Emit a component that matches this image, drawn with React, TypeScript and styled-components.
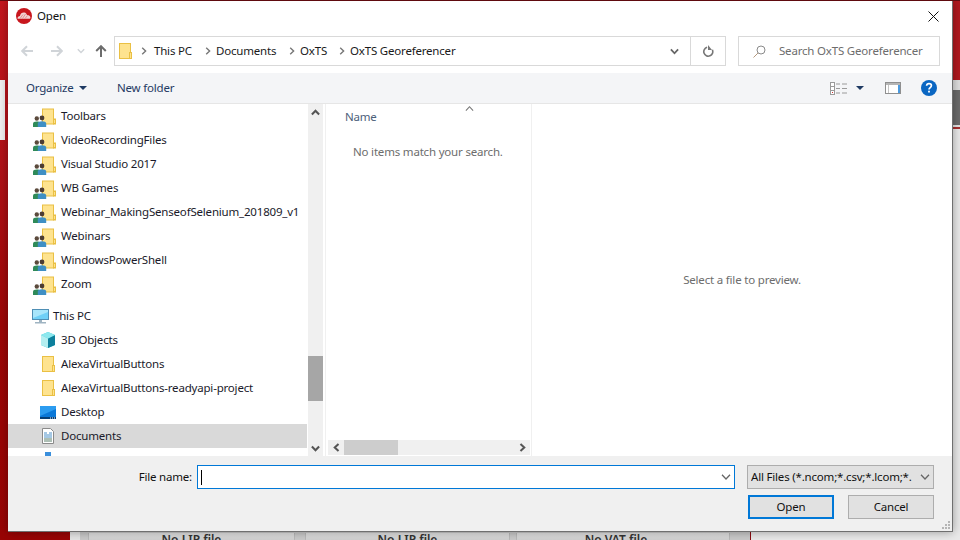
import type { ReactNode } from "react";
import styled, { createGlobalStyle } from "styled-components";

const GlobalStyle = createGlobalStyle`
  html, body {
    margin: 0;
    padding: 0;
    width: 960px;
    height: 540px;
    overflow: hidden;
    background: #e9e9e9;
    font-family: "Noto Sans", "Open Sans", sans-serif;
  }
  * { box-sizing: border-box; }
`;

const Desktop = styled.div`
  position: relative;
  width: 960px;
  height: 540px;
  overflow: hidden;
  display: flex;
  align-items: stretch;
  border-top: 1px solid #5f0a0e;
`;

/* app behind the dialog, only its edges are visible */
const AppRail = styled.div`
  position: relative;
  width: 70px;
  flex: none;
  background: linear-gradient(180deg, #c4161d 0%, #b01218 30%, #9c0606 60%, #980404 100%);
`;
const RailItem = styled.div`
  position: absolute;
  left: 0;
  top: 79px;
  width: 5px;
  height: 60px;
  background: #f0f0f0;
`;
const AppCenter = styled.div`
  width: 681px;
  flex: none;
  background: #c9c9c9;
  display: flex;
  align-items: flex-end;
  padding-right: 20px;
  border-left: 10px solid #e4e4e4;
  border-right: 1px solid #8b0d12;
`;
const AppPanel = styled.div<{ $w: number; $gap: number; $inset?: number }>`
  width: ${(p) => p.$w}px;
  height: 7px;
  margin-left: ${(p) => p.$gap}px;
  padding-right: ${(p) => p.$inset ?? 0}px;
  background: linear-gradient(180deg, #e2e2e2, #cfcfcf);
  border-left: 1px solid #b9b9b9;
  border-right: 1px solid #b9b9b9;
  font-size: 12px;
  font-weight: 600;
  line-height: 14px;
  text-align: center;
  color: #333;
  overflow: hidden;
`;
const AppRight = styled.div`
  flex: 1;
  display: flex;
  flex-direction: column;
`;
const AppRightBand = styled.div<{ $h: number; $bg: string }>`
  height: ${(p) => p.$h}px;
  background: ${(p) => p.$bg};
  flex: none;
`;

/* the dialog itself */
const Dialog = styled.div`
  position: absolute;
  left: 8px;
  top: 0;
  width: 945px;
  height: 531px;
  background: #fff;
  border-right: 1px solid #6f6f6f;
  border-bottom: 1px solid #6f6f6f;
  box-shadow: 0 0 9px rgba(0, 0, 0, 0.35);
  display: flex;
  flex-direction: column;
  font-size: 11.5px;
  letter-spacing: -0.19px;
  color: #1a1a1a;
`;
const Label = styled.span`
  margin-bottom: 2px;
  white-space: nowrap;
`;
const TitleBar = styled.div`
  height: 30px;
  flex: none;
  display: flex;
  align-items: center;
  padding: 0 13px 0 8px;
  gap: 5px;
`;
const TitleText = styled(Label)`
  flex: 1;
  color: #111;
`;
const AddressRow = styled.div`
  height: 42px;
  flex: none;
  display: flex;
  align-items: flex-start;
  padding: 5px 12px 0 13px;
`;
const NavButton = styled.div<{ $w: number }>`
  width: ${(p) => p.$w}px;
  height: 29px;
  flex: none;
  display: flex;
  align-items: center;
  justify-content: flex-start;
`;
const AddressBox = styled.div`
  width: 612px;
  height: 30px;
  border: 1px solid #d9d9d9;
  display: flex;
  align-items: center;
  padding-left: 4px;
`;
const Crumb = styled(Label)<{ $w: number }>`
  width: ${(p) => p.$w}px;
  flex: none;
  color: #1a1a1a;
`;
const ChevronSlot = styled.span<{ $w: number; $pad: number }>`
  width: ${(p) => p.$w}px;
  padding-left: ${(p) => p.$pad}px;
  flex: none;
  display: flex;
`;
const AddressDrop = styled.div`
  margin-left: auto;
  width: 33px;
  height: 100%;
  display: flex;
  align-items: center;
  justify-content: center;
  border-right: 1px solid #d9d9d9;
`;
const Refresh = styled.div`
  width: 34px;
  height: 100%;
  display: flex;
  align-items: center;
  justify-content: center;
`;
const SearchBox = styled.div`
  width: 202px;
  height: 30px;
  margin-left: 12px;
  border: 1px solid #d9d9d9;
  display: flex;
  align-items: center;
  padding-left: 14px;
  gap: 13px;
  color: #6d6d6d;
`;
const Toolbar = styled.div`
  height: 31px;
  flex: none;
  background: #f4f5f7;
  border-bottom: 1px solid #e6e6e6;
  display: flex;
  align-items: center;
  padding: 0 15px 0 18px;
  color: #1f3a63;
`;
const ToolItem = styled.span<{ $w: number; $gap?: number }>`
  width: ${(p) => p.$w}px;
  gap: ${(p) => p.$gap ?? 0}px;
  flex: none;
  display: flex;
  align-items: center;
  white-space: nowrap;
`;
const ToolRight = styled.div`
  margin-left: auto;
  display: flex;
  align-items: center;
`;

const Main = styled.div`
  height: 352px;
  flex: none;
  display: flex;
`;
const TreePane = styled.div`
  width: 300px;
  flex: none;
  overflow: hidden;
  background: #fff;
`;
const TreeRow = styled.div<{ $pad: number; $gapTop?: boolean; $selected?: boolean }>`
  height: 24px;
  flex: none;
  margin-top: ${(p) => (p.$gapTop ? 8 : 0)}px;
  margin-right: 1px;
  padding-left: ${(p) => p.$pad}px;
  background: ${(p) => (p.$selected ? "#d9d9d9" : "transparent")};
  display: flex;
  align-items: center;
  white-space: nowrap;
  color: #1a1a2a;
`;
const TreeIcon = styled.span<{ $w: number }>`
  width: ${(p) => p.$w}px;
  flex: none;
  display: flex;
`;
const VScroll = styled.div`
  width: 15px;
  flex: none;
  background: #f0f0f0;
  display: flex;
  flex-direction: column;
`;
const VArrow = styled.div`
  height: 16px;
  flex: none;
  display: flex;
  align-items: center;
  justify-content: center;
`;
const VTrack = styled.div`
  flex: 1;
`;
const VThumb = styled.div<{ $top: number; $h: number }>`
  margin-top: ${(p) => p.$top}px;
  height: ${(p) => p.$h}px;
  background: #a6a6a6;
`;
const ListPane = styled.div`
  width: 207px;
  flex: none;
  margin-left: 2px;
  border-left: 1px solid #f0f0f0;
  border-right: 1px solid #f0f0f0;
  display: flex;
  flex-direction: column;
  position: relative;
`;
const SortCaret = styled.span`
  position: absolute;
  left: 139px;
  top: 0;
  display: flex;
`;
const ListHeader = styled.div`
  height: 20px;
  padding-left: 19px;
  display: flex;
  align-items: flex-end;
  color: #4c607a;
`;
const EmptyNote = styled.div`
  margin-top: 20px;
  padding-left: 27px;
  color: #6d6d6d;
  white-space: nowrap;
  flex: 1;
`;
const HScroll = styled.div`
  height: 15px;
  margin: 0 1px 1px 2px;
  flex: none;
  background: #f0f0f0;
  display: flex;
  align-items: stretch;
`;
const HArrow = styled.div`
  width: 16px;
  flex: none;
  display: flex;
  align-items: center;
  justify-content: center;
`;
const HTrack = styled.div`
  flex: 1;
`;
const HThumb = styled.div`
  width: 54px;
  height: 100%;
  background: #cdcdcd;
`;
const PreviewPane = styled.div`
  flex: 1;
  display: flex;
  align-items: center;
  justify-content: center;
  color: #6d6d6d;
  padding-bottom: 2px;
`;
const Footer = styled.div`
  flex: 1;
  position: relative;
  background: #f0f0f0;
  display: flex;
  flex-direction: column;
  padding: 9px 18px 0 0;
`;
const FileRow = styled.div`
  display: flex;
  align-items: center;
  height: 24px;
`;
const FileLabel = styled.label`
  width: 184px;
  flex: none;
  margin-bottom: 2px;
  text-align: right;
  color: #111;
  white-space: nowrap;
`;
const FileInput = styled.div`
  width: 538px;
  height: 24px;
  margin-left: 5px;
  background: #fff;
  border: 1px solid #0078d7;
  display: flex;
  align-items: center;
  justify-content: space-between;
  padding: 0 3px;
`;
const Caret = styled.span`
  width: 1px;
  height: 15px;
  background: #000;
`;
const FilterSelect = styled.div`
  width: 187px;
  height: 24px;
  margin-left: 12px;
  background: #e1e1e1;
  border: 1px solid #adadad;
  display: flex;
  align-items: center;
  padding: 0 3px;
  color: #111;
`;
const FilterText = styled(Label)`
  flex: 1;
  overflow: hidden;
`;
const ButtonRow = styled.div`
  display: flex;
  justify-content: flex-end;
  gap: 14px;
  margin-top: 6px;
`;
const DialogButton = styled.button<{ $primary?: boolean }>`
  width: 86px;
  height: 24px;
  padding: 0 0 2px;
  background: #e1e1e1;
  border: ${(p) => (p.$primary ? "2px solid #0078d7" : "1px solid #adadad")};
  font: inherit;
  letter-spacing: inherit;
  color: #111;
`;
const Grip = styled.span`
  position: absolute;
  right: 1px;
  bottom: 1px;
  display: flex;
`;

const Logo = () => (
  <svg width="16" height="16" viewBox="0 0 16 16">
    <circle cx="8" cy="8" r="8" fill="#c8161d" />
    <path d="M1.5 10.5c0-1.6 1.2-2.6 2.4-2.6C4.5 5.4 6.4 4.2 8.4 4.6c1.4.3 2.3 1.3 2.6 2.5 1.7-.2 3.4.9 3.4 2.4 0 .5-.2.9-.4 1.3H2c-.2-.1-.5-.2-.5-.3z" fill="#f3d2d2" />
    <path d="M4 10.5l3-4M6.5 10.5l3-4.5M9 10.5l2.5-3" stroke="#d67a7a" strokeWidth=".7" />
  </svg>
);
const CloseIcon = () => (
  <svg width="11" height="11" viewBox="0 0 11 11">
    <path d="M.5.5l10 10M10.5.5l-10 10" stroke="#111" strokeWidth="1" />
  </svg>
);
const NavArrow = ({ dir, color }: { dir: "left" | "right" | "up"; color: string }) => {
  const rotate = dir === "left" ? 0 : dir === "right" ? 180 : 90;
  return (
    <svg width="12" height="12" viewBox="0 0 12 12" style={{ transform: `rotate(${rotate}deg)` }}>
      <path d="M1.2 6H12M6 1.2L1.2 6 6 10.8" fill="none" stroke={color} strokeWidth="2" />
    </svg>
  );
};
const Chevron = ({
  dir,
  color = "#666",
  w = 1.4,
  size = 8,
}: {
  dir: "left" | "right" | "up" | "down";
  color?: string;
  w?: number;
  size?: number;
}) => {
  const rotate = { right: 0, down: 90, left: 180, up: 270 }[dir];
  return (
    <svg width={size} height={size} viewBox="0 0 8 8" style={{ transform: `rotate(${rotate}deg)` }}>
      <path d="M2.2 .8L5.6 4 2.2 7.2" fill="none" stroke={color} strokeWidth={w} />
    </svg>
  );
};
const FolderIcon = ({ h = 16, w = 13 }: { h?: number; w?: number }) => (
  <svg width={w} height={h} viewBox={`0 0 ${w} ${h}`}>
    <rect x=".5" y=".5" width={w - 2} height={h - 1} fill="#fee38f" stroke="#eac044" />
    <rect x={w - 2.5} y={h - 6.5} width="2" height="6" fill="#fee38f" stroke="#eac044" />
  </svg>
);
const SharedFolderIcon = () => (
  <svg width="23" height="23" viewBox="0 -3.5 23 23">
    <rect x="9.5" y=".5" width="11" height="15" fill="#fee38f" stroke="#eac044" />
    <rect x="20.5" y="10.5" width="2" height="5" fill="#fee38f" stroke="#eac044" />
    <circle cx="3.8" cy="10" r="2.2" fill="#5b4a3c" />
    <path d="M0 18.5v-3.5c0-1.3 1.4-2 3.8-2 1.6 0 3 .5 3.4 1.4v4.1z" fill="#2f8a58" />
    <circle cx="9" cy="9.5" r="2.4" fill="#4d3c32" />
    <path d="M4.8 18.5V15c0-1.4 1.9-2.2 4.2-2.2s4.2.8 4.2 2.2v3.5z" fill="#3f8fc4" />
  </svg>
);
const PcIcon = () => (
  <svg width="17" height="15" viewBox="0 0 17 15">
    <rect x=".5" y=".5" width="16" height="10" fill="#6fd0f7" stroke="#4f8fb5" />
    <path d="M1 1h15v2L1 9z" fill="#a8e6fb" />
    <path d="M7 11h3v2H7zM3 13h11v1.5H3z" fill="#9fb4c2" />
  </svg>
);
const CubeIcon = () => (
  <svg width="16" height="16" viewBox="0 0 16 16">
    <path d="M8 0l7 3v10l-7 3-7-3V3z" fill="#3cc7d6" />
    <path d="M8 6.5L15 3v10l-7 3z" fill="#0d7f9c" />
    <path d="M8 0l7 3-7 3.5L1 3z" fill="#8ce8ee" />
    <path d="M1 3l7 3.5V16l-7-3z" fill="#b4eef0" />
  </svg>
);
const DesktopIcon = () => (
  <svg width="16" height="13" viewBox="0 0 16 13">
    <rect width="16" height="13" fill="#0a78d8" />
    <path d="M0 0h16v3L0 10z" fill="#2c9cf0" />
    <path d="M0 11h16v2H0z" fill="#063f76" />
    <path d="M10 12h1M12 12h1M14 12h1" stroke="#e7f3ff" />
  </svg>
);
const DocIcon = () => (
  <svg width="12" height="16" viewBox="0 0 12 16">
    <path d="M.5.5h8l3 3v12H.5z" fill="#fff" stroke="#8a8a8a" />
    <path d="M2 5h3M7 5h3M2 7h8M2 9h8" stroke="#4a90c8" />
    <path d="M2 11h8M2 13h8" stroke="#5a7f6a" />
  </svg>
);
const DownloadsIcon = () => (
  <svg width="16" height="16" viewBox="0 0 16 16">
    <path d="M5 0h6v8h4l-7 7-7-7h4z" fill="#3a8fdc" />
  </svg>
);
const SearchIcon = () => (
  <svg width="13" height="13" viewBox="0 0 13 13">
    <circle cx="8" cy="5" r="4" fill="none" stroke="#8a8a8a" />
    <path d="M5 8l-4.5 4.5" stroke="#b59a80" />
  </svg>
);
const RefreshIcon = () => (
  <svg width="12" height="13" viewBox="0 0 12 13">
    <path d="M8.8 3.2A4.5 4.5 0 1 1 3 3.2" fill="none" stroke="#777" strokeWidth="1.6" transform="rotate(25 6 7.5)" />
    <path d="M7 0v5h4z" fill="#777" transform="translate(-1 0)" />
  </svg>
);
const ViewsIcon = () => (
  <svg width="17" height="13" viewBox="0 0 17 13">
    <rect x=".5" y=".5" width="4" height="12" fill="#fff" stroke="#9a9a9a" />
    <path d="M1 4.5h3M1 8.5h3" stroke="#9a9a9a" />
    <rect x="2" y="10" width="1" height="1" fill="#d03030" />
    <path d="M6 2h4M12 2h5M6 6.5h4M12 6.5h5M6 11h4M12 11h5" stroke="#9a9a9a" />
  </svg>
);
const PaneIcon = () => (
  <svg width="16" height="12" viewBox="0 0 16 12">
    <rect x=".5" y=".5" width="15" height="11" fill="#fff" stroke="#8f8f8f" />
    <path d="M1 2h14" stroke="#b5b5b5" strokeWidth="2" />
    <path d="M3.5 3v8" stroke="#c4c4c4" />
    <rect x="13" y="3" width="2" height="8" fill="#4a9ae0" />
  </svg>
);
const HelpIcon = () => (
  <svg width="16" height="16" viewBox="0 0 16 16">
    <circle cx="8" cy="8" r="8" fill="#0a66c2" />
    <path d="M5.6 5.8C5.7 4.4 6.7 3.6 8 3.6c1.4 0 2.4.8 2.4 2 0 2-2.4 2-2.4 3.9" fill="none" stroke="#fff" strokeWidth="1.7" />
    <rect x="7.1" y="10.7" width="1.8" height="1.8" fill="#fff" />
  </svg>
);
const DropTriangle = () => (
  <svg width="8" height="4" viewBox="0 0 8 4">
    <path d="M0 0h8L4 4z" fill="#1f3a63" />
  </svg>
);
const GripIcon = () => (
  <svg width="9" height="9" viewBox="0 0 9 9" fill="#b5b5b5">
    <path d="M6 0h2v2H6zM3 3h2v2H3zM6 3h2v2H6zM0 6h2v2H0zM3 6h2v2H3zM6 6h2v2H6z" />
  </svg>
);

type TreeItem = {
  label: string;
  pad: number;
  iconW: number;
  icon: ReactNode;
  gapTop?: boolean;
  selected?: boolean;
};

const shared = (label: string): TreeItem => ({ label, pad: 25, iconW: 28, icon: <SharedFolderIcon /> });
const plain = (label: string): TreeItem => ({ label, pad: 34, iconW: 19, icon: <FolderIcon h={16} w={13} /> });

const treeItems: TreeItem[] = [
  shared("Toolbars"),
  shared("VideoRecordingFiles"),
  shared("Visual Studio 2017"),
  shared("WB Games"),
  shared("Webinar_MakingSenseofSelenium_201809_v1"),
  shared("Webinars"),
  shared("WindowsPowerShell"),
  shared("Zoom"),
  { label: "This PC", pad: 24, iconW: 21, icon: <PcIcon />, gapTop: true },
  { label: "3D Objects", pad: 32, iconW: 21, icon: <CubeIcon /> },
  plain("AlexaVirtualButtons"),
  plain("AlexaVirtualButtons-readyapi-project"),
  { label: "Desktop", pad: 32, iconW: 21, icon: <DesktopIcon /> },
  { label: "Documents", pad: 34, iconW: 19, icon: <DocIcon />, selected: true },
  { label: "Downloads", pad: 32, iconW: 21, icon: <DownloadsIcon /> },
];

const crumbs = [
  { label: "This PC", w: 50 },
  { label: "Documents", w: 72 },
  { label: "OxTS", w: 38 },
  { label: "OxTS Georeferencer", w: 130 },
];

export default function App() {
  return (
    <Desktop>
      <GlobalStyle />
      <AppRail>
        <RailItem />
      </AppRail>
      <AppCenter>
        <AppPanel $w={207} $gap={8}>No LIP file</AppPanel>
        <AppPanel $w={205} $gap={10}>No LIP file</AppPanel>
        <AppPanel $w={214} $gap={6} $inset={14}>No VAT file</AppPanel>
      </AppCenter>
      <AppRight>
        <AppRightBand $h={79} $bg="#b0181e" />
        <AppRightBand $h={10} $bg="#dedede" />
        <AppRightBand $h={35} $bg="#6b6b6b" />
        <AppRightBand $h={2} $bg="#e4e4e4" />
        <AppRightBand $h={2} $bg="#a83030" />
        <AppRightBand $h={411} $bg="#e9e9e9" />
      </AppRight>
      <Dialog>
        <TitleBar>
          <Logo />
          <TitleText>Open</TitleText>
          <CloseIcon />
        </TitleBar>
        <AddressRow>
          <NavButton $w={30}>
            <NavArrow dir="left" color="#d0d4d8" />
          </NavButton>
          <NavButton $w={26}>
            <NavArrow dir="right" color="#d0d4d8" />
          </NavButton>
          <NavButton $w={18}>
            <Chevron dir="down" color="#d0d4d8" />
          </NavButton>
          <NavButton $w={19}>
            <NavArrow dir="up" color="#6d6d6d" />
          </NavButton>
          <AddressBox>
            <FolderIcon h={16} w={13} />
            <ChevronSlot $w={22} $pad={8}>
              <Chevron dir="right" color="#777" />
            </ChevronSlot>
            {crumbs.flatMap((c, i) => {
              const crumb = (
                <Crumb key={c.label} $w={c.w}>
                  {c.label}
                </Crumb>
              );
              return i < crumbs.length - 1
                ? [
                    crumb,
                    <ChevronSlot key={`sep${i}`} $w={12} $pad={0}>
                      <Chevron dir="right" color="#777" />
                    </ChevronSlot>,
                  ]
                : [crumb];
            })}
            <AddressDrop>
              <Chevron dir="down" color="#666" w={1.6} size={9} />
            </AddressDrop>
            <Refresh>
              <RefreshIcon />
            </Refresh>
          </AddressBox>
          <SearchBox>
            <SearchIcon />
            <Label>Search OxTS Georeferencer</Label>
          </SearchBox>
        </AddressRow>
        <Toolbar>
          <ToolItem $w={91} $gap={5}>
            <Label>Organize</Label>
            <DropTriangle />
          </ToolItem>
          <ToolItem $w={70}>
            <Label>New folder</Label>
          </ToolItem>
          <ToolRight>
            <ToolItem $w={26}>
              <ViewsIcon />
            </ToolItem>
            <ToolItem $w={29}>
              <DropTriangle />
            </ToolItem>
            <ToolItem $w={36}>
              <PaneIcon />
            </ToolItem>
            <ToolItem $w={16}>
              <HelpIcon />
            </ToolItem>
          </ToolRight>
        </Toolbar>
        <Main>
          <TreePane>
            {treeItems.map((item) => (
              <TreeRow key={item.label} $pad={item.pad} $gapTop={item.gapTop} $selected={item.selected}>
                <TreeIcon $w={item.iconW}>{item.icon}</TreeIcon>
                <Label>{item.label}</Label>
              </TreeRow>
            ))}
          </TreePane>
          <VScroll>
            <VArrow>
              <Chevron dir="up" color="#555" w={1.8} size={9} />
            </VArrow>
            <VTrack>
              <VThumb $top={236} $h={45} />
            </VTrack>
            <VArrow>
              <Chevron dir="down" color="#555" w={1.8} size={9} />
            </VArrow>
          </VScroll>
          <ListPane>
            <SortCaret>
              <Chevron dir="up" color="#777" w={1} size={9} />
            </SortCaret>
            <ListHeader>Name</ListHeader>
            <EmptyNote>No items match your search.</EmptyNote>
            <HScroll>
              <HArrow>
                <Chevron dir="left" color="#555" w={1.8} size={9} />
              </HArrow>
              <HTrack>
                <HThumb />
              </HTrack>
              <HArrow>
                <Chevron dir="right" color="#555" w={1.8} size={9} />
              </HArrow>
            </HScroll>
          </ListPane>
          <PreviewPane>Select a file to preview.</PreviewPane>
        </Main>
        <Footer>
          <FileRow>
            <FileLabel>File name:</FileLabel>
            <FileInput>
              <Caret />
              <Chevron dir="down" color="#666" w={1} size={10} />
            </FileInput>
            <FilterSelect>
              <FilterText>All Files (*.ncom;*.csv;*.lcom;*.</FilterText>
              <Chevron dir="down" color="#666" w={1} size={10} />
            </FilterSelect>
          </FileRow>
          <ButtonRow>
            <DialogButton $primary>Open</DialogButton>
            <DialogButton>Cancel</DialogButton>
          </ButtonRow>
          <Grip>
            <GripIcon />
          </Grip>
        </Footer>
      </Dialog>
    </Desktop>
  );
}
